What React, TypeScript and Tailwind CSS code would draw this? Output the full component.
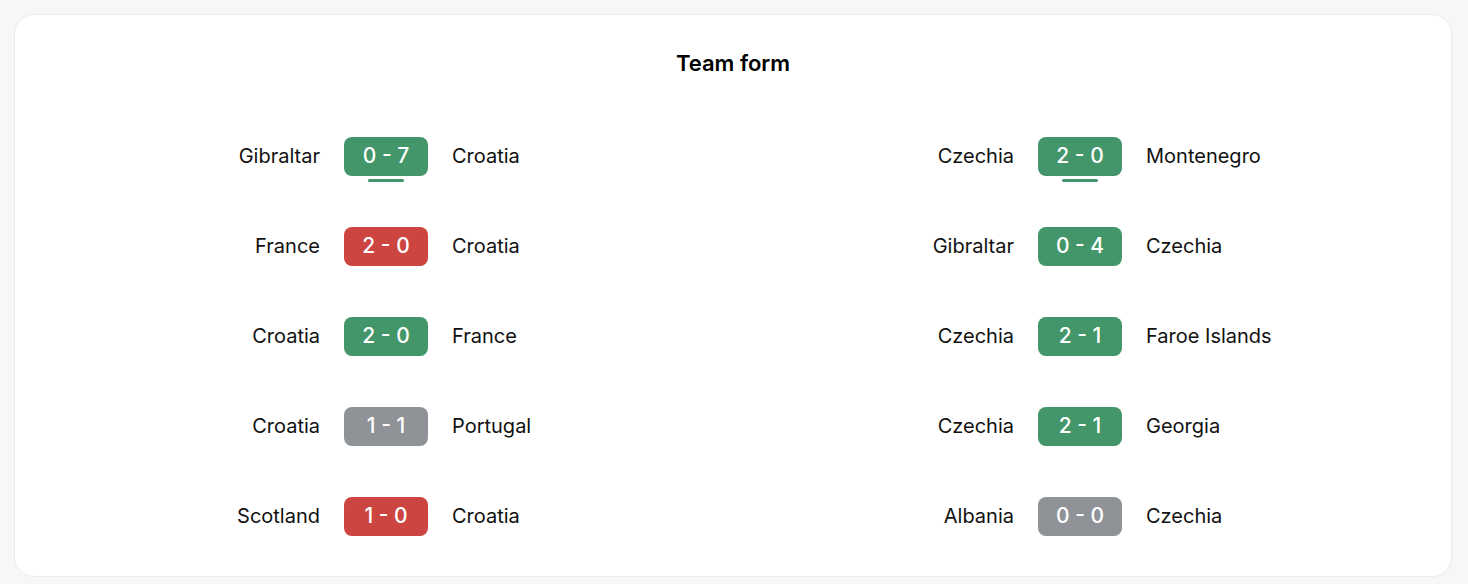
import React from "react";

type Result = "win" | "loss" | "draw";

type Match = {
  home: string;
  away: string;
  score: string;
  result: Result;
  latest?: boolean;
};

const croatia: Match[] = [
  { home: "Gibraltar", away: "Croatia", score: "0 - 7", result: "win", latest: true },
  { home: "France", away: "Croatia", score: "2 - 0", result: "loss" },
  { home: "Croatia", away: "France", score: "2 - 0", result: "win" },
  { home: "Croatia", away: "Portugal", score: "1 - 1", result: "draw" },
  { home: "Scotland", away: "Croatia", score: "1 - 0", result: "loss" },
];

const czechia: Match[] = [
  { home: "Czechia", away: "Montenegro", score: "2 - 0", result: "win", latest: true },
  { home: "Gibraltar", away: "Czechia", score: "0 - 4", result: "win" },
  { home: "Czechia", away: "Faroe Islands", score: "2 - 1", result: "win" },
  { home: "Czechia", away: "Georgia", score: "2 - 1", result: "win" },
  { home: "Albania", away: "Czechia", score: "0 - 0", result: "draw" },
];

const badgeColor: Record<Result, string> = {
  win: "bg-[#43966a]",
  loss: "bg-[#cc4541]",
  draw: "bg-[#8f9397]",
};

function MatchRow({ match }: { match: Match }) {
  return (
    <div className="flex h-[90px] items-center">
      <span className="flex-1 text-right">{match.home}</span>
      <div className="relative mx-6">
        <div
          className={`flex h-[39px] w-[84px] items-center justify-center rounded-lg text-[21px] font-medium text-white ${badgeColor[match.result]}`}
        >
          {match.score}
        </div>
        {match.latest && (
          <div className="absolute left-1/2 top-[42px] h-[3px] w-9 -translate-x-1/2 rounded-full bg-[#43966a]" />
        )}
      </div>
      <span className="flex-1">{match.away}</span>
    </div>
  );
}

export default function App() {
  return (
    <div className="min-h-screen bg-[#f7f7f7] pl-[14px] pr-[16px] py-[14px] font-['Inter',sans-serif] text-[20px] text-[#111]">
      <section className="rounded-[20px] border border-[#ebebeb] bg-white px-6 pb-[15px] pt-[34px]">
        <h2 className="mb-[34px] text-center text-[22px] font-semibold leading-7 text-black">Team form</h2>
        <div className="grid grid-cols-2">
          <div>
            {croatia.map((m, i) => (
              <MatchRow key={i} match={m} />
            ))}
          </div>
          <div>
            {czechia.map((m, i) => (
              <MatchRow key={i} match={m} />
            ))}
          </div>
        </div>
      </section>
    </div>
  );
}
